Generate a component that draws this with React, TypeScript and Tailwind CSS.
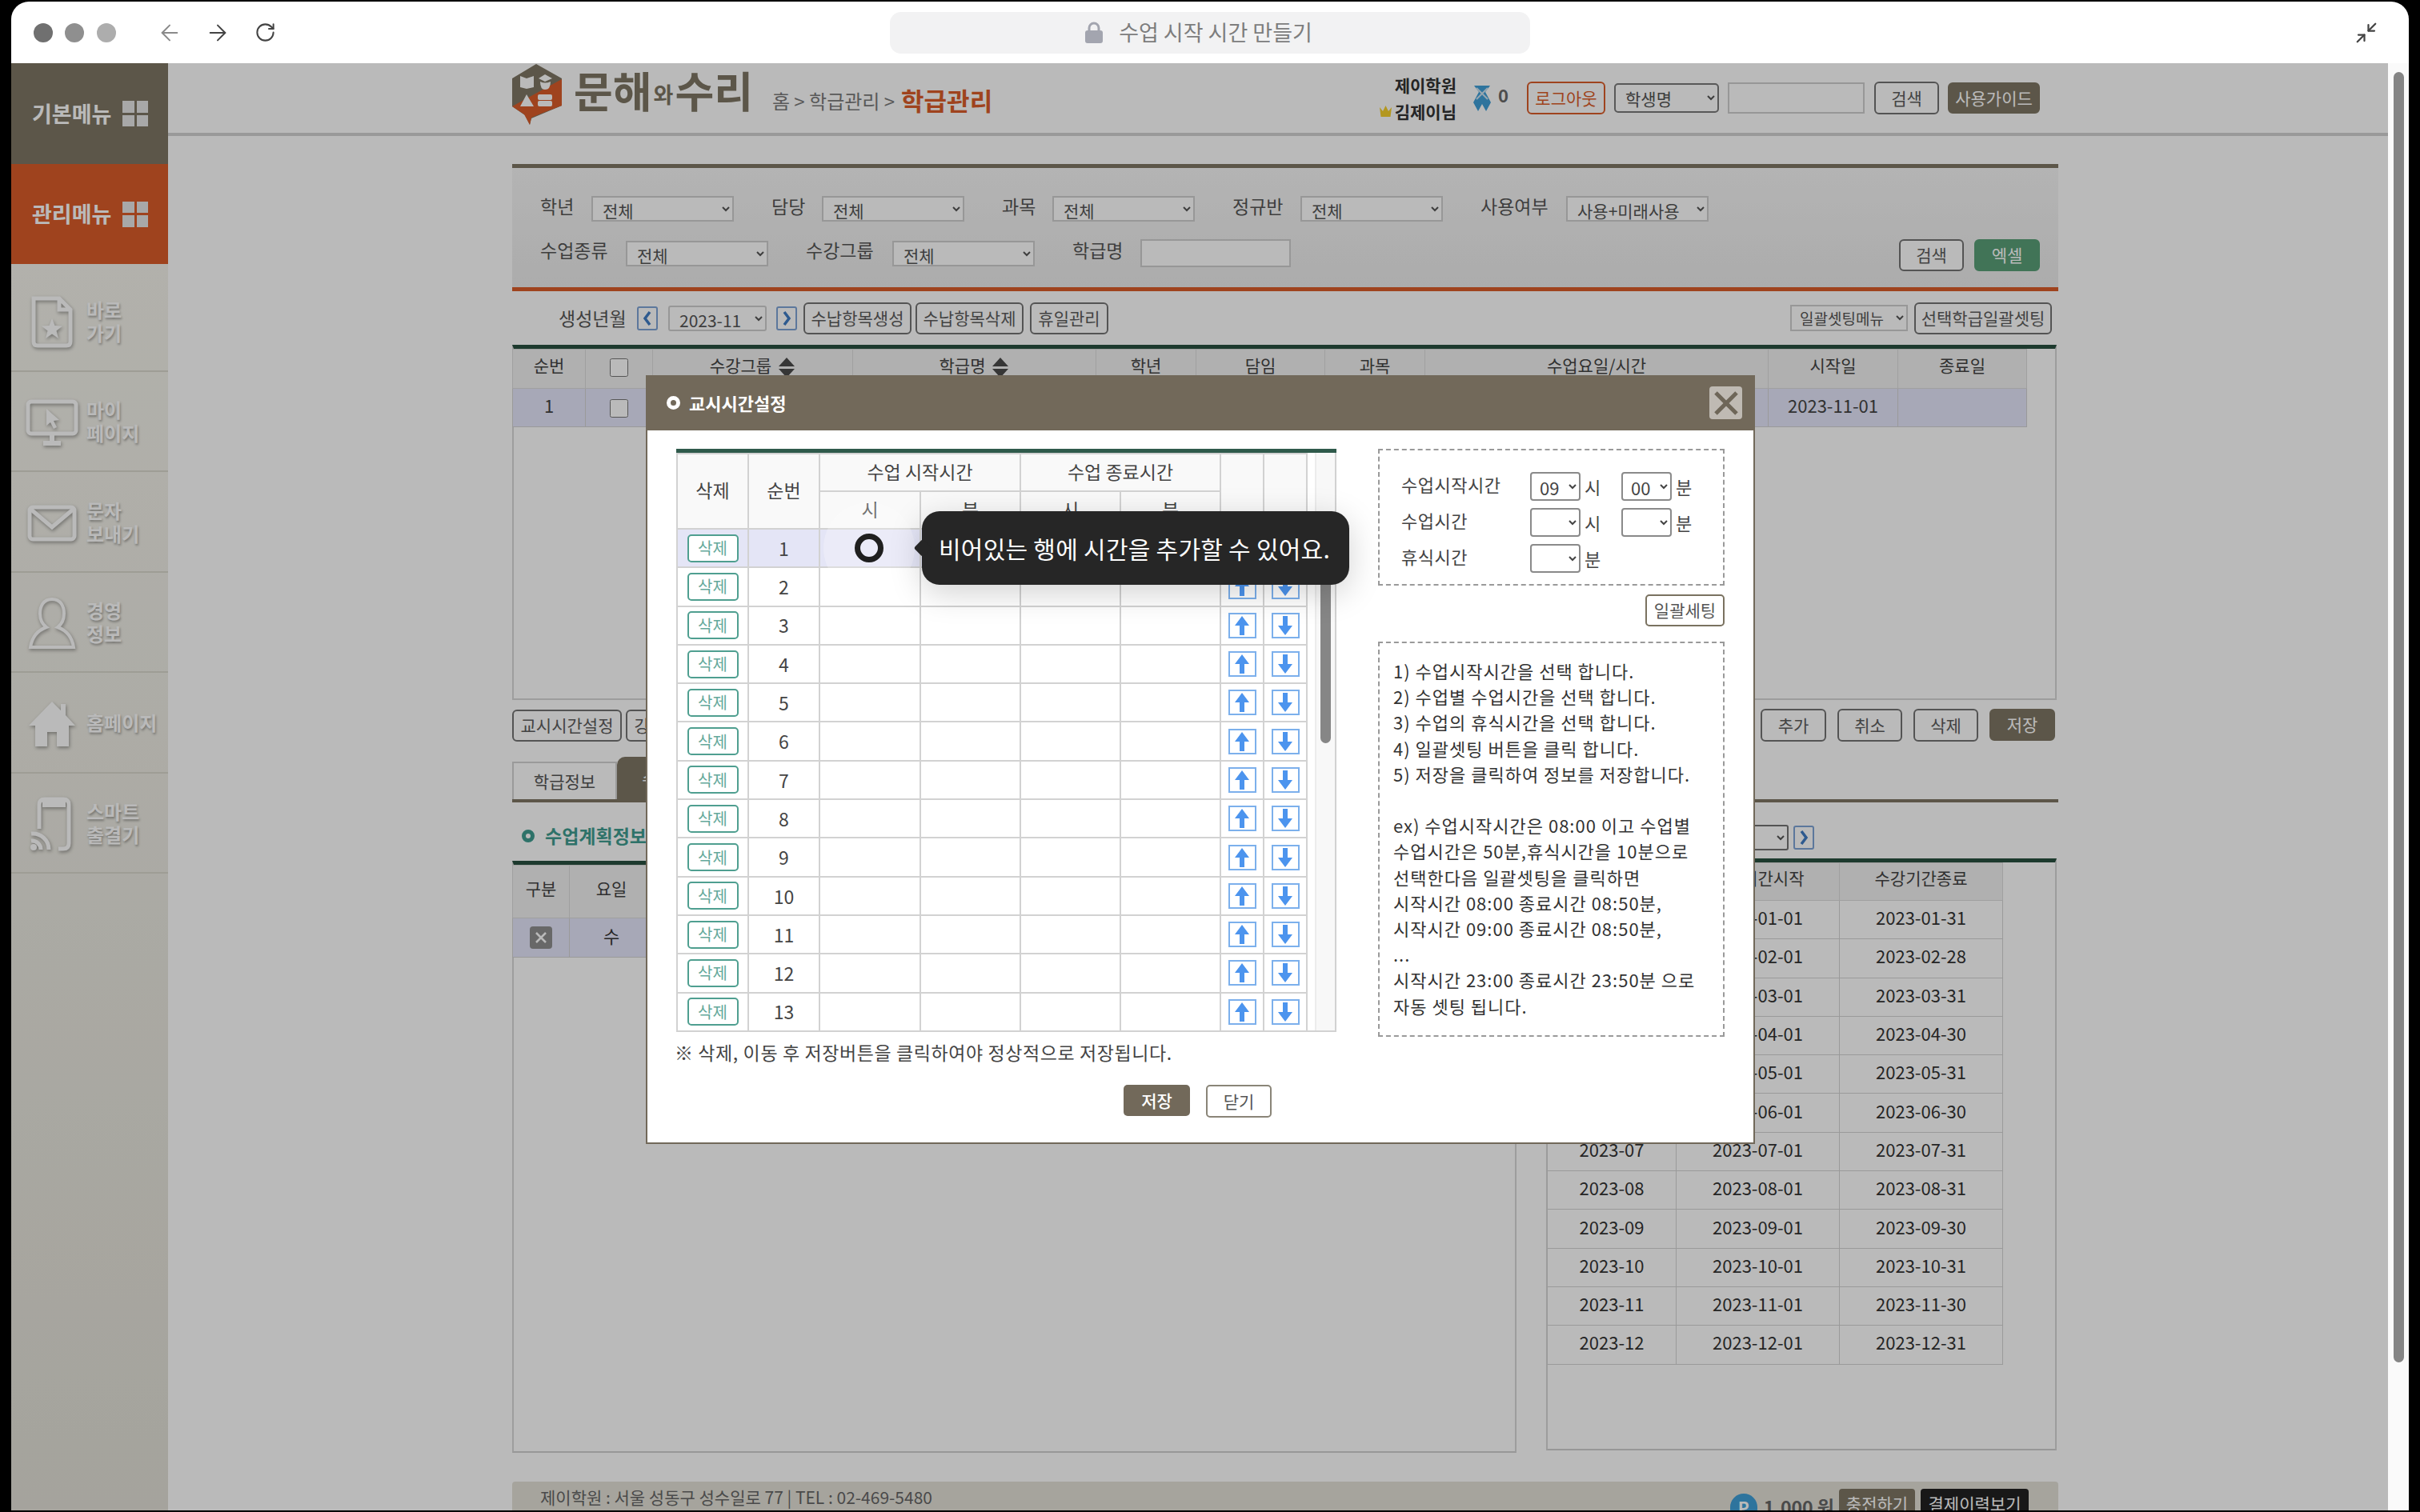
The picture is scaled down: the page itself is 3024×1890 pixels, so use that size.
import { ArrowLeft, ArrowRight, RotateCw, Minimize2 } from 'lucide-react';
import { twMerge } from 'tailwind-merge';
import type { ReactNode } from 'react';

const SB_TEXT = 'text-white text-[24px] leading-[29px] font-bold [text-shadow:1px_2px_3px_rgba(0,0,0,0.35)]';

const lowerMonths = [
  ['2023-01', '2023-01-01', '2023-01-31'],
  ['2023-02', '2023-02-01', '2023-02-28'],
  ['2023-03', '2023-03-01', '2023-03-31'],
  ['2023-04', '2023-04-01', '2023-04-30'],
  ['2023-05', '2023-05-01', '2023-05-31'],
  ['2023-06', '2023-06-01', '2023-06-30'],
  ['2023-07', '2023-07-01', '2023-07-31'],
  ['2023-08', '2023-08-01', '2023-08-31'],
  ['2023-09', '2023-09-01', '2023-09-30'],
  ['2023-10', '2023-10-01', '2023-10-31'],
  ['2023-11', '2023-11-01', '2023-11-30'],
  ['2023-12', '2023-12-01', '2023-12-31'],
];

const guideLines = [
  '1) 수업시작시간을 선택 합니다.',
  '2) 수업별 수업시간을 선택 합니다.',
  '3) 수업의 휴식시간을 선택 합니다.',
  '4) 일괄셋팅 버튼을 클릭 합니다.',
  '5) 저장을 클릭하여 정보를 저장합니다.',
  '\u00a0',
  'ex) 수업시작시간은 08:00 이고 수업별',
  '수업시간은 50분,휴식시간을 10분으로',
  '선택한다음 일괄셋팅을 클릭하면',
  '시작시간 08:00 종료시간 08:50분,',
  '시작시간 09:00 종료시간 08:50분,',
  '...',
  '시작시간 23:00 종료시간 23:50분 으로',
  '자동 셋팅 됩니다.',
];

function Btn({ className, children }: { className: string; children: ReactNode }) {
  return (
    <button className={twMerge('flex items-center justify-center rounded-[6px] border-2 border-[#747474] bg-white text-[21px] text-[#5c5c5c] shrink-0', className)}>
      {children}
    </button>
  );
}

function Sel({ className, value }: { className: string; value: string }) {
  return (
    <select className={twMerge('shrink-0 border-2 border-[#d0d0d0] bg-white pl-[8px] text-[21px] text-[#555]', className)} defaultValue={value}>
      <option>{value}</option>
    </select>
  );
}

function PageArrow({ dir }: { dir: 'left' | 'right' }) {
  return (
    <div className="flex h-[30px] w-[26px] shrink-0 items-center justify-center rounded-[3px] border-2 border-[#7fa4d6] bg-white">
      <svg width="12" height="20" viewBox="0 0 12 20">
        <path d={dir === 'left' ? 'M9 2 L3 10 L9 18' : 'M3 2 L9 10 L3 18'} fill="none" stroke="#3f7cc4" strokeWidth="3.5" />
      </svg>
    </div>
  );
}

function SortIcon() {
  return (
    <svg width="22" height="25" viewBox="0 0 22 25" className="ml-[8px] inline-block align-middle">
      <path d="M11 0 L21 11 L1 11 Z M11 25 L21 14 L1 14 Z" fill="#4a4a4a" />
    </svg>
  );
}

function GridMark() {
  return (
    <div className="grid h-[32px] w-[32px] shrink-0 grid-cols-2 gap-[3px]">
      <span className="bg-[#e7e7e7]" />
      <span className="bg-[#e7e7e7]" />
      <span className="bg-[#e7e7e7]" />
      <span className="bg-[#e7e7e7]" />
    </div>
  );
}

function SideItem({ icon, lines }: { icon: ReactNode; lines: string[] }) {
  return (
    <div className="flex h-[125.5px] items-center border-b-2 border-[#d9d7cc] pl-[8px]">
      <div className="flex w-[86px] shrink-0 items-center justify-center pt-[4px]">{icon}</div>
      <div className={SB_TEXT}>
        {lines.map((l) => (
          <div key={l}>{l}</div>
        ))}
      </div>
    </div>
  );
}

function Sidebar() {
  const iconCls = 'drop-shadow-[1px_2px_2px_rgba(0,0,0,0.35)]';
  return (
    <aside className="flex w-[196px] shrink-0 flex-col bg-gradient-to-b from-[#f7f6ef] to-[#e2e0d7]">
      <div className="flex h-[126px] items-center gap-[14px] bg-[#7f7764] pl-[26px] text-[27px] font-bold text-white">
        기본메뉴
        <GridMark />
      </div>
      <div className="flex h-[125px] items-center gap-[14px] bg-[#da5d2a] pl-[26px] text-[27px] font-bold text-white">
        관리메뉴
        <GridMark />
      </div>
      <div className="h-[9px]" />
      <SideItem
        lines={['바로', '가기']}
        icon={
          <svg width="56" height="66" viewBox="0 0 56 66" className={iconCls}>
            <path d="M5 3 H37 L51 17 V57 Q51 62 46 62 H10 Q5 62 5 57 Z M37 3 V17 H51" fill="none" stroke="white" strokeWidth="5" />
            <path d="M28 28 L31.5 37 L41 37.5 L33.5 43.5 L36 53 L28 47.5 L20 53 L22.5 43.5 L15 37.5 L24.5 37 Z" fill="white" />
          </svg>
        }
      />
      <SideItem
        lines={['마이', '페이지']}
        icon={
          <svg width="66" height="58" viewBox="0 0 66 58" className={iconCls}>
            <rect x="3" y="3" width="60" height="40" rx="4" fill="none" stroke="white" strokeWidth="5" />
            <path d="M22 55 H44 M33 43 V55" stroke="white" strokeWidth="6" />
            <path d="M26 12 L42 26 L35 27 L39 35 L35 37 L31 29 L26 33 Z" fill="white" />
          </svg>
        }
      />
      <SideItem
        lines={['문자', '보내기']}
        icon={
          <svg width="62" height="46" viewBox="0 0 62 46" className={iconCls}>
            <rect x="3" y="3" width="56" height="40" rx="4" fill="none" stroke="white" strokeWidth="5" />
            <path d="M5 6 L31 28 L57 6" fill="none" stroke="white" strokeWidth="5" />
          </svg>
        }
      />
      <SideItem
        lines={['경영', '정보']}
        icon={
          <svg width="60" height="66" viewBox="0 0 60 66" className={iconCls}>
            <path d="M30 3 C19 3 15 12 15 21 C15 29 19 35 23 38 C12 42 5 50 3 63 H57 C55 50 48 42 37 38 C41 35 45 29 45 21 C45 12 41 3 30 3 Z" fill="none" stroke="white" strokeWidth="4" />
          </svg>
        }
      />
      <SideItem
        lines={['홈페이지']}
        icon={
          <svg width="58" height="56" viewBox="0 0 58 56" className={iconCls}>
            <path d="M29 0 L40 11 V3 H46 V17 L58 30 H50 V56 H35 V38 H23 V56 H8 V30 H0 Z" fill="white" />
          </svg>
        }
      />
      <SideItem
        lines={['스마트', '출결기']}
        icon={
          <svg width="56" height="68" viewBox="0 0 56 68" className={iconCls}>
            <path d="M12 40 V10 Q12 3 19 3 H42 Q49 3 49 10 V58 Q49 65 42 65 H36" fill="none" stroke="white" strokeWidth="5" />
            <path d="M16 9 H45" stroke="white" strokeWidth="8" />
            <path d="M2 46 A20 20 0 0 1 24 66 M2 55 A11 11 0 0 1 14 66" fill="none" stroke="white" strokeWidth="5" />
            <circle cx="5" cy="63" r="4" fill="white" />
          </svg>
        }
      />
    </aside>
  );
}

function Logo() {
  return (
    <div className="flex shrink-0 items-start">
      <svg width="62" height="76" viewBox="0 0 62 76" className="mt-[1px]">
        <path d="M30 0 L62 18 V52 L24 68 L22 76 L16 64 L0 53 V18 Z" fill="#7f7764" />
        <path d="M62 19 V52 L36 62 L24 67 L22 76 L15 63 L0 53 Z" fill="#da5d2a" />
        <path d="M10 15 L18 18 L27 15 V29 L18 31 L10 29 Z" fill="white" />
        <path d="M33 18 L41 13 L50 18 L41 22 Z" fill="white" />
        <path d="M35 22 Q41 25 48 22 Q48 32 41 32 Q35 32 35 22 Z" fill="white" />
        <path d="M18 38 L27 53 H10 Z" fill="white" />
        <rect x="32" y="38" width="18" height="7" rx="2" fill="white" />
        <rect x="32" y="46" width="18" height="7" rx="2" fill="white" />
      </svg>
      <div className="ml-[15px] mt-[-2px] flex items-end font-bold leading-[70px] text-[#7f7764]">
        <span className="text-[53px]">문해</span>
        <span className="mx-[2px] translate-y-[6px] text-[27px]">와</span>
        <span className="text-[53px]">수리</span>
      </div>
    </div>
  );
}

function TopHeader() {
  return (
    <header className="h-[91px] border-b-4 border-[#d2d2d2] pl-[430px]">
      <div className="flex h-full w-[1909px] items-center justify-between">
        <div className="flex items-center self-start">
          <Logo />
          <div className="ml-[24px] mt-[16px] flex items-center text-[24px] text-[#7b7b7b]">
            홈 &gt; 학급관리 &gt;
            <span className="ml-[8px] text-[31px] font-bold text-[#da5d2a]">학급관리</span>
          </div>
        </div>
        <div className="flex items-center">
          <div className="text-right text-[21px] font-bold leading-[33px] text-[#333]">
            <div>제이학원</div>
            <div className="flex items-center">
              <svg width="17" height="14" viewBox="0 0 17 14" className="mr-[3px]">
                <path d="M1 2 L5 7 L8.5 0 L12 7 L16 2 L14.5 14 H2.5 Z" fill="#f6cf2b" />
              </svg>
              김제이님
            </div>
          </div>
          <svg width="24" height="32" viewBox="0 0 24 32" className="ml-[20px]">
            <path d="M2 0 H22 L16 8 L23 21 L17 32 L12 23 L7 32 L1 21 L8 8 Z" fill="#3f9fd8" />
            <path d="M5 3 L19 17 M19 3 L5 17" stroke="#cfe4f2" strokeWidth="2" />
          </svg>
          <span className="mb-[8px] ml-[8px] text-[22px] font-bold text-[#6a6a6a]">0</span>
          <Btn className="ml-[23px] h-[41px] w-[98px] border-[#da5d2a] text-[#da5d2a]">로그아웃</Btn>
          <Sel className="ml-[11px] h-[37px] w-[131px] rounded-[5px] border-[#7a7a7a]" value="학생명" />
          <input className="ml-[11px] h-[39px] w-[171px] border-2 border-[#cfcfcf] bg-white" />
          <Btn className="ml-[12px] h-[41px] w-[81px]">검색</Btn>
          <Btn className="ml-[11px] h-[39px] w-[115px] border-[#7f7764] bg-[#7f7764] text-white">사용가이드</Btn>
        </div>
      </div>
    </header>
  );
}

function SearchPanel() {
  const lbl = 'text-[23px] text-[#555] pb-[8px] shrink-0';
  const sel = 'h-[32px] w-[178px]';
  return (
    <section className="mt-[35px] h-[159px] w-[1932px] border-y-[5px] border-b-[#da5d2a] border-t-[#7f7764] bg-gradient-to-b from-[#f7f7f7] to-[#ececec] pl-[35px] pr-[23px]">
      <div className="mt-[35px] flex h-[32px] items-center">
        <span className={`${lbl} w-[64px]`}>학년</span>
        <Sel className={sel} value="전체" />
        <span className={`${lbl} ml-[47px] w-[63px]`}>담당</span>
        <Sel className={sel} value="전체" />
        <span className={`${lbl} ml-[47px] w-[63px]`}>과목</span>
        <Sel className={sel} value="전체" />
        <span className={`${lbl} ml-[47px] w-[85px]`}>정규반</span>
        <Sel className={sel} value="전체" />
        <span className={`${lbl} ml-[47px] w-[107px]`}>사용여부</span>
        <Sel className={sel} value="사용+미래사용" />
      </div>
      <div className="mt-[22px] flex h-[40px] items-center">
        <div className="mb-[5px] flex items-center">
          <span className={`${lbl} w-[107px]`}>수업종류</span>
          <Sel className={sel} value="전체" />
          <span className={`${lbl} ml-[47px] w-[108px]`}>수강그룹</span>
          <Sel className={sel} value="전체" />
          <span className={`${lbl} ml-[47px] w-[85px]`}>학급명</span>
          <input className="h-[35px] w-[188px] border-2 border-[#cfcfcf] bg-white" />
        </div>
        <div className="ml-auto flex gap-[13px]">
          <Btn className="h-[40px] w-[81px]">검색</Btn>
          <Btn className="h-[40px] w-[82px] border-[#59a078] bg-[#59a078] text-white">엑셀</Btn>
        </div>
      </div>
    </section>
  );
}

function ActionRow() {
  return (
    <div className="flex h-[67px] w-[1932px] items-center pl-[58px] pr-[8px]">
      <span className="w-[98px] shrink-0 text-[23px] text-[#555]">생성년월</span>
      <PageArrow dir="left" />
      <Sel className="ml-[13px] h-[32px] w-[123px] rounded-[3px]" value="2023-11" />
      <div className="ml-[12px]">
        <PageArrow dir="right" />
      </div>
      <Btn className="ml-[8px] h-[40px] w-[135px]">수납항목생성</Btn>
      <Btn className="ml-[5px] h-[40px] w-[135px]">수납항목삭제</Btn>
      <Btn className="ml-[8px] h-[40px] w-[98px]">휴일관리</Btn>
      <Sel className="ml-auto h-[33px] w-[147px] pl-[6px] text-[19px]" value="일괄셋팅메뉴" />
      <Btn className="ml-[8px] h-[40px] w-[172px]">선택학급일괄셋팅</Btn>
    </div>
  );
}

function MainTable() {
  const th = 'border border-[#dcdcdc] bg-[#f1f1f1] pb-[8px] font-normal text-[21px] text-[#444]';
  const td = 'border border-[#d4d4d4] bg-[#e5e7fb] pb-[6px] text-[22px] text-[#444] text-center';
  return (
    <div className="h-[444px] w-[1930px] border-x-2 border-b-2 border-t-[5px] border-x-[#d8d8d8] border-b-[#d8d8d8] border-t-[#28503f]">
      <table className="-ml-[2px] w-[1892px] table-fixed border-collapse">
        <colgroup>
          <col className="w-[91px]" />
          <col className="w-[84px]" />
          <col className="w-[250px]" />
          <col className="w-[304px]" />
          <col className="w-[125px]" />
          <col className="w-[161px]" />
          <col className="w-[125px]" />
          <col className="w-[429px]" />
          <col className="w-[162px]" />
          <col className="w-[161px]" />
        </colgroup>
        <thead>
          <tr className="h-[49px]">
            <th className={th}>순번</th>
            <th className={th}>
              <input type="checkbox" className="h-[23px] w-[23px] align-middle" />
            </th>
            <th className={th}>
              수강그룹
              <SortIcon />
            </th>
            <th className={th}>
              학급명
              <SortIcon />
            </th>
            <th className={th}>학년</th>
            <th className={th}>담임</th>
            <th className={th}>과목</th>
            <th className={th}>수업요일/시간</th>
            <th className={th}>시작일</th>
            <th className={th}>종료일</th>
          </tr>
        </thead>
        <tbody>
          <tr className="h-[48px]">
            <td className={td}>1</td>
            <td className={td}>
              <input type="checkbox" className="h-[23px] w-[23px] align-middle" />
            </td>
            <td className={td} />
            <td className={td} />
            <td className={td} />
            <td className={td} />
            <td className={td} />
            <td className={td} />
            <td className={td}>2023-11-01</td>
            <td className={td} />
          </tr>
        </tbody>
      </table>
    </div>
  );
}

function ButtonsRow() {
  return (
    <div className="mt-[11px] flex h-[41px] w-[1928px] items-center">
      <Btn className="h-[40px] w-[137px]">교시시간설정</Btn>
      <Btn className="ml-[5px] h-[40px] w-[137px]">강사시간설정</Btn>
      <div className="ml-auto flex gap-[14px]">
        <Btn className="h-[41px] w-[82px]">추가</Btn>
        <Btn className="h-[41px] w-[81px]">취소</Btn>
        <Btn className="h-[41px] w-[81px]">삭제</Btn>
        <Btn className="h-[40px] w-[82px] border-[#7f7764] bg-[#7f7764] text-white">저장</Btn>
      </div>
    </div>
  );
}

function Tabs() {
  return (
    <div className="mt-[19px] flex h-[57px] w-[1932px] items-end border-b-4 border-[#7f7764]">
      <div className="flex h-[47px] w-[131px] items-center justify-center border-x-2 border-t-2 border-[#d4d4d4] text-[21px] text-[#555]">학급정보</div>
      <div className="flex h-[53px] w-[140px] items-center justify-center rounded-t-[10px] bg-[#7f7764] text-[21px] text-white">수업계획</div>
    </div>
  );
}

function LowerSection() {
  const th = 'border border-[#dcdcdc] bg-[#f1f1f1] pb-[8px] font-normal text-[21px] text-[#444]';
  const td = 'border border-[#d4d4d4] pb-[6px] text-[22px] text-[#333] text-center';
  return (
    <div className="flex w-[1930px] justify-between">
      <div className="w-[1255px]">
        <div className="flex h-[73px] items-center pl-[12px] pt-[10px] text-[23px] font-bold text-[#3f9d90]">
          <span className="mr-[13px] h-[16px] w-[16px] rounded-full border-[5px] border-[#3f9d90]" />
          수업계획정보
        </div>
        <div className="h-[740px] border-x-2 border-b-2 border-t-[5px] border-x-[#d8d8d8] border-b-[#d0d0d0] border-t-[#28503f]">
          <table className="-ml-[2px] w-full table-fixed border-collapse">
            <colgroup>
              <col className="w-[71px]" />
              <col className="w-[105px]" />
              <col />
            </colgroup>
            <thead>
              <tr className="h-[66px]">
                <th className={th}>구분</th>
                <th className={th}>요일</th>
                <th className={th} />
              </tr>
            </thead>
            <tbody>
              <tr className="h-[49px] bg-[#e5e7fb]">
                <td className="border border-[#d4d4d4]">
                  <span className="mx-auto flex h-[28px] w-[28px] items-center justify-center rounded-[4px] bg-[#8f8f8f]">
                    <svg width="18" height="18" viewBox="0 0 18 18">
                      <path d="M3 3 L15 15 M15 3 L3 15" stroke="white" strokeWidth="2.5" />
                    </svg>
                  </span>
                </td>
                <td className={td}>수</td>
                <td className={td} />
              </tr>
            </tbody>
          </table>
        </div>
      </div>
      <div className="w-[638px]">
        <div className="flex h-[70px] items-center pl-[141px] pt-[18px]">
          <PageArrow dir="left" />
          <Sel className="ml-[13px] h-[32px] w-[123px] rounded-[3px] border-[#747474]" value="2023" />
          <div className="ml-[6px]">
            <PageArrow dir="right" />
          </div>
        </div>
        <div className="h-[740px] border-x-2 border-b-2 border-t-[5px] border-x-[#d8d8d8] border-b-[#d0d0d0] border-t-[#28503f]">
          <table className="-ml-[1px] w-[569px] table-fixed border-collapse">
            <colgroup>
              <col className="w-[161px]" />
              <col className="w-[204px]" />
              <col className="w-[204px]" />
            </colgroup>
            <thead>
              <tr className="h-[47px]">
                <th className={th} />
                <th className={th}>수강기간시작</th>
                <th className={th}>수강기간종료</th>
              </tr>
            </thead>
            <tbody>
              {lowerMonths.map((m) => (
                <tr key={m[0]} className="h-[48.3px]">
                  <td className={td}>{m[0]}</td>
                  <td className={td}>{m[1]}</td>
                  <td className={td}>{m[2]}</td>
                </tr>
              ))}
            </tbody>
          </table>
        </div>
      </div>
    </div>
  );
}

function PageFooter() {
  return (
    <footer className="mt-[36px] flex h-[60px] w-[1932px] items-start rounded-t-[4px] bg-[#e4e1d8] pl-[35px] pr-[37px] pt-[9px] text-[21px] text-[#666]">
      <span className="-mt-[5px]">제이학원 : 서울 성동구 성수일로 77 | TEL : 02-469-5480</span>
      <span className="ml-auto mt-[6px] flex h-[36px] w-[34px] items-center justify-center rounded-full bg-[#3f9fd8] text-[21px] font-bold text-white">P</span>
      <span className="ml-[8px] mt-[5px] text-[23px] font-bold text-[#666]">1,000 원</span>
      <div className="ml-[6px] flex h-[40px] w-[95px] items-center justify-center rounded-t-[4px] bg-[#7f7764] pb-[3px] text-[21px] text-white">충전하기</div>
      <div className="ml-[7px] flex h-[40px] w-[135px] items-center justify-center rounded-t-[4px] bg-[#222] pb-[3px] text-[21px] text-white">결제이력보기</div>
    </footer>
  );
}

function ArrowBtn({ up }: { up: boolean }) {
  return (
    <div className="mx-auto flex h-[32px] w-[35px] items-center justify-center border-2 border-[#7cb0ec] bg-white">
      <svg width="20" height="26" viewBox="0 0 20 26">
        <path
          d={up ? 'M10 1 L19 13 H13 V25 H7 V13 H1 Z' : 'M10 25 L19 13 H13 V1 H7 V13 H1 Z'}
          fill="#4c94ee"
        />
      </svg>
    </div>
  );
}

function LessonTable() {
  const cell = 'border-2 border-[#d2d2d2]';
  const th = `${cell} bg-[#f9f9f9] pb-[3px] font-normal text-[23px] text-[#444]`;
  const rows = Array.from({ length: 13 }, (_, i) => i + 1);
  return (
    <div className="flex w-[825px] border-t-[5px] border-[#2f5a4b]">
      <table className="h-fit w-[787px] table-fixed border-collapse">
        <colgroup>
          <col className="w-[89px]" />
          <col className="w-[89px]" />
          <col className="w-[126px]" />
          <col className="w-[125px]" />
          <col className="w-[125px]" />
          <col className="w-[125px]" />
          <col className="w-[54px]" />
          <col className="w-[54px]" />
        </colgroup>
        <thead>
          <tr className="h-[47px]">
            <th rowSpan={2} className={th}>삭제</th>
            <th rowSpan={2} className={th}>순번</th>
            <th colSpan={2} className={th}>수업 시작시간</th>
            <th colSpan={2} className={th}>수업 종료시간</th>
            <th rowSpan={2} className={th} />
            <th rowSpan={2} className={th} />
          </tr>
          <tr className="h-[47px]">
            <th className={th}>시</th>
            <th className={th}>분</th>
            <th className={th}>시</th>
            <th className={th}>분</th>
          </tr>
        </thead>
        <tbody>
          {rows.map((n) => (
            <tr key={n} className={n === 1 ? 'h-[48.3px] bg-[#e4e5f6]' : 'h-[48.3px]'}>
              <td className={cell}>
                <button className="mx-auto flex h-[35px] w-[64px] items-center justify-center rounded-[5px] border-2 border-[#4f9f90] bg-white text-[20px] text-[#64a99b]">
                  삭제
                </button>
              </td>
              <td className={`${cell} text-center text-[23px] text-[#444]`}>{n}</td>
              <td className={cell} />
              <td className={cell} />
              <td className={cell} />
              <td className={cell} />
              <td className={cell}>
                <ArrowBtn up />
              </td>
              <td className={cell}>
                <ArrowBtn up={false} />
              </td>
            </tr>
          ))}
        </tbody>
      </table>
      <div className="flex w-[38px] border-b-2 border-r-2 border-[#d2d2d2]">
        <div className="w-[11px] border-r-2 border-[#ececec] bg-white" />
        <div className="flex-1 bg-[#f8f8f8] pl-[5px] pt-[85px]">
          <div className="h-[278px] w-[13px] rounded-full bg-[#868686]" />
        </div>
      </div>
    </div>
  );
}

function TimeSelect({ value }: { value: string }) {
  return (
    <select defaultValue={value} className="h-[36px] w-[63px] shrink-0 rounded-[4px] border-2 border-[#8a8a8a] bg-white pl-[6px] text-[22px] text-[#444]">
      <option>{value}</option>
    </select>
  );
}

function SettingsPanel() {
  const unit = 'ml-[5px] text-[22px] text-[#444]';
  const label = 'w-[161px] shrink-0 pb-[5px] text-[22px] tracking-[0.5px] text-[#444]';
  return (
    <div className="ml-[52px] w-[433px]">
      <div className="flex h-[171px] flex-col gap-[9px] border-2 border-dashed border-[#9a9a9a] pl-[27px] pt-[27px]">
        <div className="flex h-[36px] items-center">
          <span className={label}>수업시작시간</span>
          <TimeSelect value="09" />
          <span className={`${unit} w-[46px]`}>시</span>
          <TimeSelect value="00" />
          <span className={unit}>분</span>
        </div>
        <div className="flex h-[36px] items-center">
          <span className={label}>수업시간</span>
          <TimeSelect value="" />
          <span className={`${unit} w-[46px]`}>시</span>
          <TimeSelect value="" />
          <span className={unit}>분</span>
        </div>
        <div className="flex h-[36px] items-center">
          <span className={label}>휴식시간</span>
          <TimeSelect value="" />
          <span className={unit}>분</span>
        </div>
      </div>
      <div className="mt-[11px] flex justify-end">
        <button className="flex h-[40px] w-[99px] items-center justify-center rounded-[5px] border-2 border-[#7a7260] text-[21px] text-[#555]">일괄세팅</button>
      </div>
      <div className="mt-[19px] h-[494px] border-2 border-dashed border-[#9a9a9a] pl-[17px] pt-[18px] text-[22px] leading-[32.2px] tracking-[1px] text-[#333]">
        {guideLines.map((l, i) => (
          <div key={i} className="whitespace-pre">{l}</div>
        ))}
      </div>
    </div>
  );
}

function Modal() {
  return (
    <div className="absolute left-[793px] top-[390px] z-20 h-[961px] w-[1386px] border-x-2 border-b-2 border-[#72695a] bg-white">
      <div className="flex h-[69px] items-center bg-[#72695a] pl-[24px] pr-[14px] text-[22px] font-bold text-white">
        <span className="mr-[11px] h-[17px] w-[17px] rounded-full border-[5px] border-white" />
        교시시간설정
        <div className="ml-auto flex h-[41px] w-[41px] items-center justify-center rounded-[4px] bg-[#bfbab3]">
          <svg width="34" height="34" viewBox="0 0 34 34">
            <path d="M4 4 L30 30 M30 4 L4 30" stroke="#6e6658" strokeWidth="5" />
          </svg>
        </div>
      </div>
      <div className="flex pl-[36px] pt-[23px]">
        <div>
          <LessonTable />
          <div className="-ml-[2px] mt-[8px] text-[23px] tracking-[0.6px] text-[#444]">※ 삭제, 이동 후 저장버튼을 클릭하여야 정상적으로 저장됩니다.</div>
        </div>
        <SettingsPanel />
      </div>
      <div className="absolute bottom-[31px] left-0 right-0 flex items-start justify-center gap-[20px] pr-[7px]">
        <button className="flex h-[39px] w-[83px] items-center justify-center rounded-[5px] bg-[#72695a] text-[21px] font-medium text-white">저장</button>
        <button className="flex h-[41px] w-[82px] items-center justify-center rounded-[5px] border-2 border-[#8a8578] bg-white text-[21px] text-[#555]">닫기</button>
      </div>

      {/* Tutorial hint on top of the first row */}
      <div className="absolute left-[220px] top-[159px] flex h-[114px] w-[114px] items-center justify-center rounded-full bg-white/25">
        <div className="h-[36px] w-[36px] rounded-full border-[7px] border-[#1f1f1f]" />
      </div>
      <div className="absolute left-[343px] top-[170px] flex h-[92px] w-[534px] items-center rounded-[22px] bg-[#262626] pl-[21px] text-[30px] tracking-[0.25px] whitespace-nowrap text-white shadow-[0_10px_40px_rgba(0,0,0,0.18)]">
        <span className="absolute left-[-7px] top-[38px] h-[16px] w-[16px] rotate-45 rounded-[3px] bg-[#262626]" />
        비어있는 행에 시간을 추가할 수 있어요.
      </div>
    </div>
  );
}

export default function App() {
  return (
    <div className="h-[1890px] w-[3024px] overflow-hidden bg-black pl-[14px] pt-[2px] font-['Noto_Sans_CJK_KR','Noto_Sans',sans-serif]">
      <div className="flex h-[1886px] w-[2996px] flex-col overflow-hidden rounded-t-[22px] bg-white">
        {/* Browser toolbar */}
        <div className="grid h-[77px] shrink-0 grid-cols-[1fr_800px_1fr] items-center">
          <div className="flex items-center pl-[28px]">
            <span className="h-[24px] w-[24px] rounded-full bg-[#707070]" />
            <span className="ml-[15px] h-[24px] w-[24px] rounded-full bg-[#8f8f8f]" />
            <span className="ml-[16px] h-[24px] w-[24px] rounded-full bg-[#adadad]" />
            <ArrowLeft size={32} strokeWidth={1.5} className="ml-[51px] text-[#8a8a8a]" />
            <ArrowRight size={32} strokeWidth={1.5} className="ml-[28px] text-[#444]" />
            <RotateCw size={27} strokeWidth={1.8} className="ml-[30px] text-[#444]" />
          </div>
          <div className="flex h-[52px] items-center justify-center rounded-[14px] bg-[#f2f2f3] pr-[29px] text-[27px] text-[#7d7d7d]">
            <svg width="24" height="27" viewBox="0 0 24 27" className="mr-[19px]">
              <path d="M6 12 V8 A6 6 0 0 1 18 8 V12" fill="none" stroke="#a3a5af" strokeWidth="3" />
              <rect x="1" y="11" width="22" height="16" rx="3" fill="#a3a5af" />
            </svg>
            수업 시작 시간 만들기
          </div>
          <div className="flex justify-end pr-[38px]">
            <Minimize2 size={30} strokeWidth={1.8} className="text-[#444]" />
          </div>
        </div>

        {/* Page */}
        <div className="relative flex min-h-0 flex-1">
          <Sidebar />
          <main className="min-w-0 flex-1">
            <TopHeader />
            <div className="pl-[430px]">
              <SearchPanel />
              <ActionRow />
              <MainTable />
              <ButtonsRow />
              <Tabs />
              <LowerSection />
              <PageFooter />
            </div>
          </main>
          <div className="w-[26px] shrink-0 bg-[#fafafa] pl-[7px] pt-[11px]">
            <div className="h-[1613px] w-[13px] rounded-full bg-[#858585]" />
          </div>

          {/* Dimmed backdrop and dialog */}
          <div className="absolute bottom-0 left-0 right-[26px] top-0 z-10 bg-black/27" />
          <Modal />
        </div>
      </div>
    </div>
  );
}
